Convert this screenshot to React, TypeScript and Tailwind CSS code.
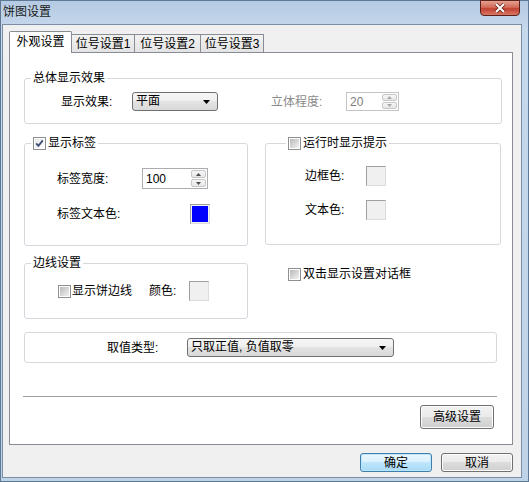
import React from "react";

const Check = ({ checked = false }: { checked?: boolean }) => (
  <span className="relative inline-block w-[13px] h-[13px] shrink-0 border border-[#8e8f8f] bg-white p-[1px]">
    <span
      className={`block w-full h-full ${
        checked
          ? "bg-[linear-gradient(135deg,#e6e6e6,#ffffff)]"
          : "bg-[linear-gradient(135deg,#b9b9b9,#f3f3f3)]"
      }`}
    />
    {checked && (
      <svg className="absolute left-0 top-0" width="11" height="11" viewBox="0 0 11 11">
        <path d="M2.2 5.4 L4.4 7.8 L8.8 2.4" stroke="#3c4e78" strokeWidth="1.8" fill="none" />
      </svg>
    )}
  </span>
);

const Arrow = ({ up, color }: { up?: boolean; color: string }) => (
  <svg width="5" height="3" viewBox="0 0 5 3">
    <path d={up ? "M0 3h5L2.5 0z" : "M0 0h5L2.5 3z"} fill={color} />
  </svg>
);

const Spin = ({
  value,
  disabled = false,
  className = "",
}: {
  value: string;
  disabled?: boolean;
  className?: string;
}) => (
  <div
    className={`flex bg-white border ${
      disabled ? "border-[#c4c4c4] text-[#7d7d7d]" : "border-[#abadb3] text-black"
    } ${className}`}
  >
    <span className="flex-1 pl-[3px] flex items-center">{value}</span>
    <div className="flex flex-col w-[16px] py-px pr-px gap-px">
      <div className="flex-1 flex items-center justify-center border border-[#c7c7c7] rounded-[2px] bg-[linear-gradient(to_bottom,#f7f7f7,#e6e6e6)]">
        <Arrow up color={disabled ? "#a8a8a8" : "#4a4a4a"} />
      </div>
      <div className="flex-1 flex items-center justify-center border border-[#c7c7c7] rounded-[2px] bg-[linear-gradient(to_bottom,#f7f7f7,#e6e6e6)]">
        <Arrow color={disabled ? "#a8a8a8" : "#4a4a4a"} />
      </div>
    </div>
  </div>
);

const Select = ({ text, className = "" }: { text: string; className?: string }) => (
  <div
    className={`flex items-center h-[19px] rounded-[3px] border border-[#707070] bg-[linear-gradient(to_bottom,#f6f6f6_0%,#efefef_50%,#e3e3e3_50%,#d9d9d9_100%)] ${className}`}
  >
    <span className="flex-1 pl-[3px] leading-[17px]">{text}</span>
    <svg width="7" height="4" viewBox="0 0 7 4" className="mr-[7px]">
      <path d="M0 0h7L3.5 4z" fill="#000" />
    </svg>
  </div>
);

const ColorBox = ({ color }: { color: string }) => (
  <span className="inline-block w-[20px] h-[20px] shrink-0 border border-[#a0a0a0] border-r-[#dcdcdc] border-b-[#dcdcdc] p-px bg-[#f0f0f0]">
    <span className="block w-full h-full" style={{ background: color }} />
  </span>
);

const WinButton = ({
  label,
  primary = false,
  className = "",
}: {
  label: string;
  primary?: boolean;
  className?: string;
}) => (
  <div
    className={`flex items-center justify-center rounded-[3px] border ${
      primary
        ? "border-[#3c7fb1] bg-[linear-gradient(to_bottom,#eaf6fd_0%,#d9f0fc_50%,#bee6fd_50%,#a7d9f5_100%)] shadow-[inset_0_0_0_1px_#bfe5f9]"
        : "border-[#707070] bg-[linear-gradient(to_bottom,#f2f2f2_0%,#ebebeb_50%,#dddddd_50%,#cfcfcf_100%)] shadow-[inset_0_0_0_1px_#fcfcfc]"
    } ${className}`}
  >
    {label}
  </div>
);

export default function App() {
  return (
    <div className="w-[529px] h-[482px] flex flex-col border border-[#5f7896] bg-[linear-gradient(to_bottom,#b5cbe3_0%,#c6d8ec_6%,#bfd3e8_100%)] font-['Liberation_Sans','Noto_Sans_CJK_SC',sans-serif] text-[12px] leading-[16px] text-black">
      {/* Title bar */}
      <div className="h-[23px] flex items-start justify-between shrink-0">
        <span className="pl-[2px] pt-[3px] text-[#1a1a1a]">饼图设置</span>
        <div className="mr-[8px] w-[40px] h-[16px] -mt-px flex items-center justify-center rounded-b-[4px] border border-[#5b201a] bg-[linear-gradient(to_bottom,#e6a191_0%,#d46a58_45%,#c2402f_55%,#d97865_100%)]">
          <svg width="12" height="10" viewBox="0 0 12 10">
            <path d="M2 1 L10 9 M10 1 L2 9" stroke="#5a1d16" strokeWidth="3.4" />
            <path d="M2 1 L10 9 M10 1 L2 9" stroke="#ffffff" strokeWidth="2" />
          </svg>
        </div>
      </div>

      {/* Client area */}
      <div className="flex-1 ml-[1px] mr-[6px] mb-[3px] border border-[#7b8ea6] bg-[#f0f0f0] pl-[6px] pr-[8px] pt-[6px]">
        {/* Tabs */}
        <div className="flex items-end h-[21px]">
          <div className="relative z-10 w-[63px] h-[22px] -mb-px flex items-start justify-center pt-[2px] bg-white border border-b-0 border-[#898c95] rounded-t-[2px]">
            外观设置
          </div>
          <div className="w-[63px] h-[18px] flex items-center justify-center border border-b-0 border-l-0 border-[#898c95] bg-[linear-gradient(to_bottom,#f2f2f2,#e3e3e3)]">
            位号设置1
          </div>
          <div className="w-[66px] h-[18px] flex items-center justify-center border border-b-0 border-l-0 border-[#898c95] bg-[linear-gradient(to_bottom,#f2f2f2,#e3e3e3)]">
            位号设置2
          </div>
          <div className="w-[63px] h-[18px] flex items-center justify-center border border-b-0 border-l-0 border-[#898c95] bg-[linear-gradient(to_bottom,#f2f2f2,#e3e3e3)]">
            位号设置3
          </div>
        </div>

        {/* Tab panel */}
        <div className="h-[393px] border border-[#898c95] bg-white pl-[14px] pr-[10px] pt-[17px] flex flex-col">
          {/* 总体显示效果 */}
          <fieldset className="h-[54px] border border-[#d5d9de] rounded-[3px]">
            <legend className="ml-[6px] px-[2px] leading-[16px]">总体显示效果</legend>
            <div className="mt-[6px] flex items-center h-[19px]">
              <span className="ml-[36px] w-[71px]">显示效果:</span>
              <Select text="平面" className="w-[86px]" />
              <span className="ml-[53px] w-[75px] text-[#8a8a8a]">立体程度:</span>
              <Spin value="20" disabled className="w-[53px] h-[19px]" />
            </div>
          </fieldset>

          {/* 显示标签 / 运行时显示提示 */}
          <div className="mt-[11px] flex gap-[17px] items-start">
            <fieldset className="w-[224px] h-[111px] border border-[#d5d9de] rounded-[3px]">
              <legend className="ml-[6px] px-[2px] leading-[16px]">
                <span className="flex items-center gap-[2px]">
                  <Check checked />
                  显示标签
                </span>
              </legend>
              <div className="mt-[17px] flex items-center h-[21px]">
                <span className="ml-[32px] w-[85px]">标签宽度:</span>
                <Spin value="100" className="w-[66px] h-[21px]" />
              </div>
              <div className="mt-[15px] flex items-center h-[20px]">
                <span className="ml-[32px] w-[133px]">标签文本色:</span>
                <ColorBox color="#0000ff" />
              </div>
            </fieldset>

            <fieldset className="w-[236px] h-[110px] border border-[#d5d9de] rounded-[3px]">
              <legend className="ml-[20px] px-[2px] leading-[16px]">
                <span className="flex items-center gap-[2px]">
                  <Check />
                  运行时显示提示
                </span>
              </legend>
              <div className="mt-[15px] flex items-center h-[20px]">
                <span className="ml-[39px] w-[61px]">边框色:</span>
                <ColorBox color="#f0f0f0" />
              </div>
              <div className="mt-[14px] flex items-center h-[20px]">
                <span className="ml-[39px] w-[61px]">文本色:</span>
                <ColorBox color="#f0f0f0" />
              </div>
            </fieldset>
          </div>

          {/* 边线设置 / 双击显示设置对话框 */}
          <div className="mt-[9px] flex gap-[17px] items-start">
            <fieldset className="w-[224px] h-[64px] border border-[#d5d9de] rounded-[3px]">
              <legend className="ml-[6px] px-[2px] leading-[16px]">边线设置</legend>
              <div className="mt-[10px] flex items-center h-[20px]">
                <span className="ml-[33px] flex items-center gap-px">
                  <Check />
                  显示饼边线
                </span>
                <span className="ml-[17px] w-[40px]">颜色:</span>
                <ColorBox color="#f0f0f0" />
              </div>
            </fieldset>
            <div className="mt-[11px] ml-[23px] flex items-center gap-[2px] h-[16px]">
              <Check />
              双击显示设置对话框
            </div>
          </div>

          {/* 取值类型 */}
          <div className="mt-[13px] w-[473px] h-[31px] border border-[#d5d9de] rounded-[3px] flex items-center">
            <span className="ml-[82px] w-[80px]">取值类型:</span>
            <Select text="只取正值, 负值取零" className="w-[207px]" />
          </div>

          {/* Separator */}
          <div className="mt-[33px] -ml-px w-[474px] border-t border-t-[#a0a0a0] border-b border-b-white" />

          <div className="mt-[7px] flex justify-end">
            <WinButton label="高级设置" className="w-[74px] h-[24px] mr-[8px]" />
          </div>
        </div>

        {/* Dialog buttons */}
        <div className="mt-[8px] flex justify-end gap-[9px]">
          <WinButton label="确定" primary className="w-[72px] h-[19px]" />
          <WinButton label="取消" className="w-[72px] h-[19px]" />
        </div>
      </div>
    </div>
  );
}
